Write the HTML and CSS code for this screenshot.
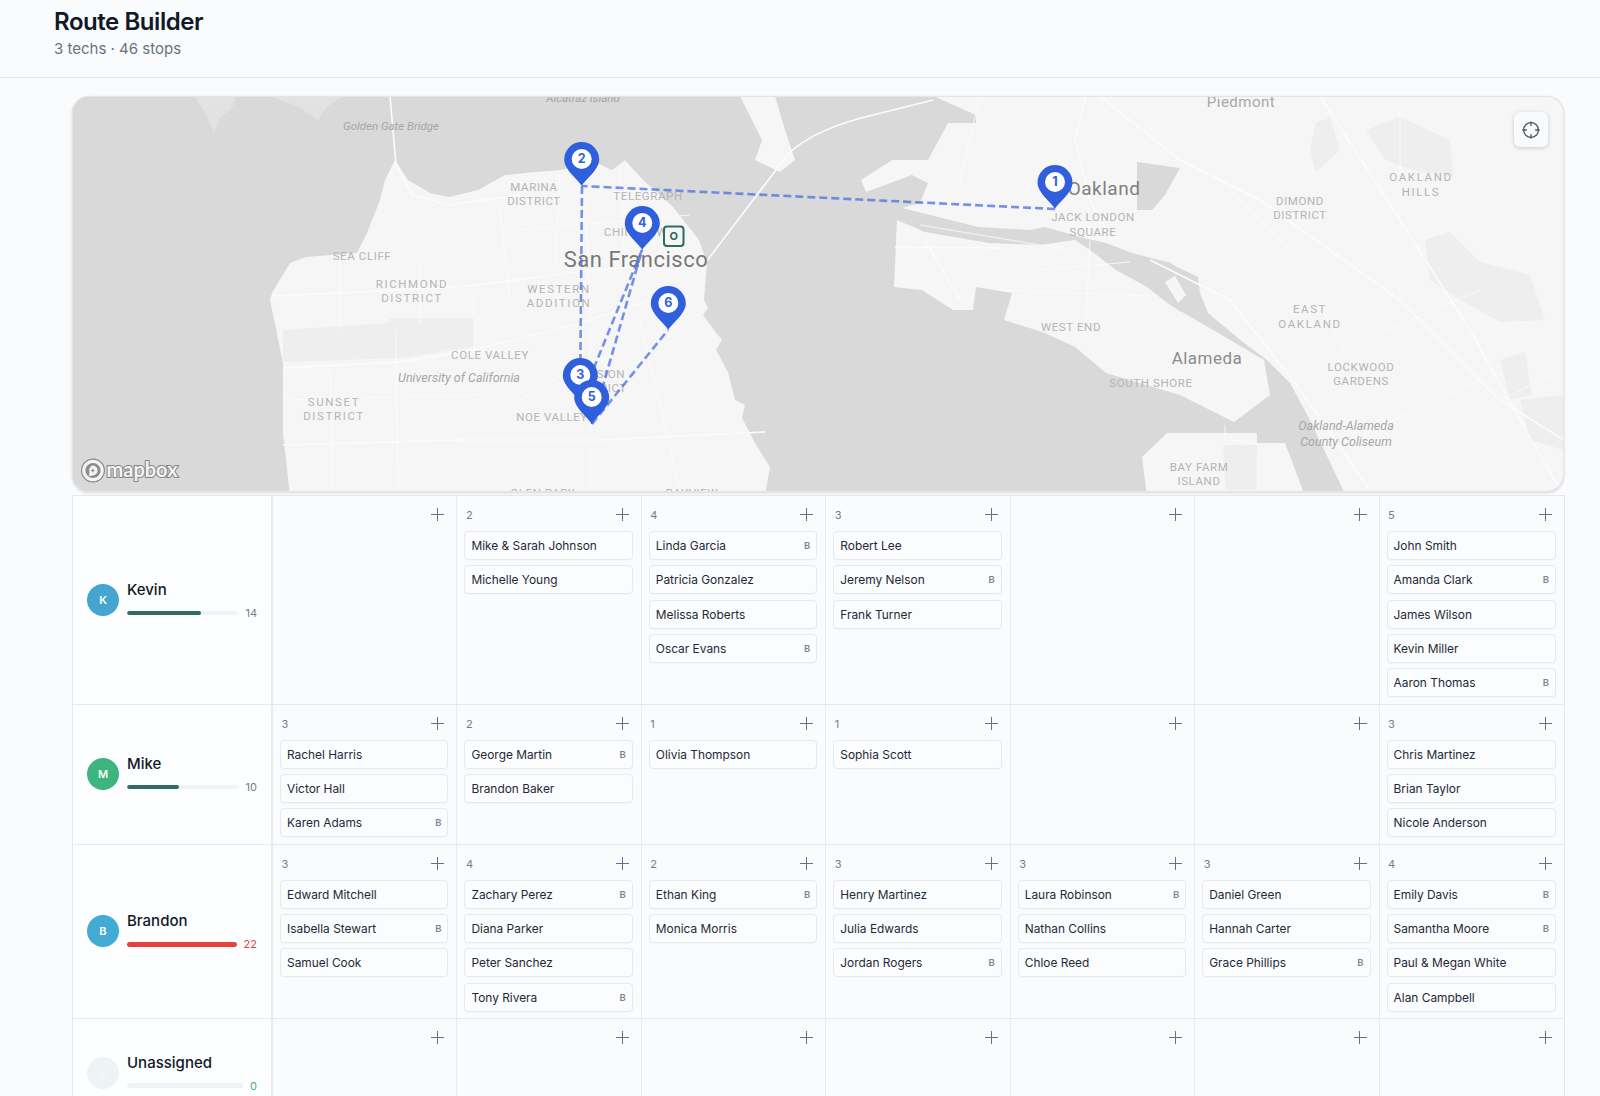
FILE: index.html
```html
<!DOCTYPE html>
<html lang="en">
<head>
  <meta charset="UTF-8" />
  <title>Route Builder</title>
  <link rel="stylesheet" href="styles.css">
</head>
<body>
  <header class="topbar">
    <h1>Route Builder</h1>
    <p>3 techs · 46 stops</p>
  </header>

  <main class="page">
    <!-- Map: the viewBox uses page coordinates, so everything below reads like the screenshot -->
    <div class="map">
      <svg class="map-art" viewBox="72 96 1492 396">
        <defs>
          <path id="pin-shape" d="M0 0C-3-6-17.5-16-17.5-26.5A17.5 17.5 0 1 1 17.5-26.5C17.5-16 3-6 0 0Z"/>
        </defs>
        <rect class="water" x="72" y="96" width="1492" height="396"/>

        <!-- land -->
        <path class="faint" d="M194 96 L205 112 L214 133 L220 118 L232 108 L236 96 Z"/>
        <path class="faint" d="M270 96 L300 108 L318 120 L326 108 L342 96 Z"/>
        <path class="land" d="M395 160 L408 180 L430 193 L449 197 L478 190 L505 175 L535 172 L561 170 L597 163 L612 170 L625 160 L643 180 L660 195 L673 207 L699 240 L707 263 L704 300 L708 308 L703 315 L714 330 L722 340 L716 350 L728 372 L735 400 L745 405 L742 418 L755 443 L770 467 L765 496 L290 496 L283 433 L283 363 L270 300 L272 293 L290 263 L306 257 L357 253 L367 233 L380 200 L385 180 Z"/>
        <path class="land" d="M740 96 L762 140 L755 160 L780 172 L795 160 L785 130 L775 96 Z"/>
        <path class="land" d="M933 96 L976 115 L976 123 L948 123 L928 160 L892 160 L861 180 L866 192 L912 175 L928 183 L920 203 L902 208 L978 227 L1030 230 L1045 227 L1080 237 L1106 243 L1132 253 L1167 262 L1198 277 L1200 293 L1208 313 L1244 343 L1267 360 L1290 383 L1310 420 L1346 496 L1564 496 L1564 96 Z"/>
        <path class="land" d="M897 220 L925 232 L989 243 L1040 245 L1075 240 L1090 250 L1116 270 L1147 287 L1170 305 L1208 327 L1264 360 L1270 395 L1250 410 L1234 422 L1180 395 L1106 373 L1075 347 L1045 333 L1004 320 L1012 293 L976 287 L973 310 L953 310 L922 290 L894 287 Z"/>
        <path class="land" d="M1142 457 L1167 433 L1257 433 L1257 443 L1285 443 L1305 496 L1147 496 Z"/>
        <path class="water" d="M1137 162 L1180 168 L1165 195 L1152 210 L1137 210 Z"/>
        <path class="water" d="M1150 268 L1170 262 L1190 280 L1195 300 L1180 312 L1165 295 Z"/>
        <path class="land" d="M1165 282 L1175 276 L1186 295 L1178 303 Z"/>

        <!-- parks -->
        <path class="park" d="M283 330 L388 323 L390 318 L474 318 L474 347 L400 358 L283 362 Z"/>
        <path class="park" d="M1316 122 L1330 118 L1340 150 L1316 172 L1310 150 Z"/>
        <path class="park" d="M1366 130 L1400 117 L1450 140 L1453 177 L1420 172 L1385 160 Z"/>
        <path class="park" d="M1425 240 L1450 232 L1480 262 L1530 275 L1545 320 L1500 322 L1460 300 L1430 280 Z"/>
        <path class="park" d="M1500 360 L1525 352 L1532 395 L1510 400 Z"/>
        <path class="park" d="M1520 400 L1564 395 L1564 450 L1530 440 Z"/>
        <path class="park" d="M1223 445 L1257 445 L1257 490 L1226 490 Z"/>

        <!-- roads -->
        <g class="road">
          <path d="M390 96 L396 165 L412 195 L449 205 L520 195"/>
          <path d="M272 296 L360 292 L470 286 L575 272 L690 262"/>
          <path d="M283 368 L400 362 L474 350 L574 325 L650 300"/>
          <path d="M283 445 L460 440 L600 440 L765 432"/>
          <path d="M706 262 L782 162 Q800 135 861 118 L933 100"/>
          <path d="M1086 96 L1075 140 L1090 200 L1110 238"/>
          <path d="M1100 96 L1180 160 L1260 200 L1400 300 L1500 400 L1564 440"/>
          <path d="M1320 96 L1400 220 L1470 330 L1520 420 L1560 490"/>
          <path d="M1150 260 L1230 300 L1300 390 L1370 490"/>
          <path d="M895 247 L1000 248"/>
          <path d="M925 240 L960 300"/>
        </g>
        <g class="road thin">
          <path d="M330 364 L333 490"/>
          <path d="M396 330 L398 490"/>
          <path d="M474 290 L474 350"/>
          <path d="M585 200 L590 300 L590 490"/>
          <path d="M640 320 L680 490"/>
          <path d="M520 400 L570 370 L640 345 L700 300"/>
          <path d="M340 262 L340 330"/>
          <path d="M420 262 L420 325"/>
          <path d="M500 210 L510 300"/>
          <path d="M283 400 L480 395"/>
          <path d="M520 230 L690 215"/>
          <path d="M560 175 L555 270"/>
          <path d="M620 170 L625 265"/>
          <path d="M980 96 L960 180 L990 225"/>
          <path d="M1040 130 L1220 130"/>
          <path d="M920 225 L1070 250"/>
          <path d="M1090 240 L1085 340"/>
          <path d="M1225 440 L1242 441 L1258 445 L1290 490"/>
          <path d="M1225 425 L1225 440"/>
          <path d="M1400 300 L1400 96"/>
          <path d="M1440 490 L1500 400 L1564 370"/>
          <path d="M1040 270 L1130 262"/>
          <path d="M1000 290 L1150 296"/>
          <path d="M1210 170 L1290 250 L1350 360"/>
          <path d="M1340 350 L1480 290"/>
          <path d="M1350 440 L1480 380"/>
        </g>

        <!-- labels -->
        <text class="lbl it" x="583" y="102">Alcatraz Island</text>
        <text class="place sm" x="1241" y="107">Piedmont</text>
        <text class="lbl it" x="391" y="130">Golden Gate Bridge</text>
        <text class="lbl" x="534" y="191">MARINA</text>
        <text class="lbl" x="534" y="205">DISTRICT</text>
        <text class="lbl" x="648" y="200">TELEGRAPH</text>
        <text class="lbl" x="640" y="236">CHINATOWN</text>
        <text class="lbl" x="362" y="260">SEA CLIFF</text>
        <text class="lbl wide" x="412" y="288">RICHMOND</text>
        <text class="lbl wide" x="412" y="302">DISTRICT</text>
        <text class="lbl wide" x="559" y="293">WESTERN</text>
        <text class="lbl wide" x="559" y="307">ADDITION</text>
        <text class="lbl" x="490" y="359">COLE VALLEY</text>
        <text class="lbl it big" x="459" y="382">University of California</text>
        <text class="lbl wide" x="334" y="406">SUNSET</text>
        <text class="lbl wide" x="334" y="420">DISTRICT</text>
        <text class="lbl" x="552" y="421">NOE VALLEY</text>
        <text class="lbl" x="600" y="378">MISSION</text>
        <text class="lbl" x="600" y="392">DISTRICT</text>
        <text class="lbl" x="543" y="497">GLEN PARK</text>
        <text class="lbl" x="692" y="497">BAYVIEW</text>
        <text class="place" x="636" y="267">San Francisco</text>
        <text class="place mid" x="1104" y="195">Oakland</text>
        <text class="lbl" x="1093" y="221">JACK LONDON</text>
        <text class="lbl" x="1093" y="236">SQUARE</text>
        <text class="lbl" x="1071" y="331">WEST END</text>
        <text class="place alm" x="1207" y="364">Alameda</text>
        <text class="lbl" x="1151" y="387">SOUTH SHORE</text>
        <text class="lbl" x="1199" y="471">BAY FARM</text>
        <text class="lbl" x="1199" y="485">ISLAND</text>
        <text class="lbl wide" x="1310" y="313">EAST</text>
        <text class="lbl wide" x="1310" y="328">OAKLAND</text>
        <text class="lbl" x="1361" y="371">LOCKWOOD</text>
        <text class="lbl" x="1361" y="385">GARDENS</text>
        <text class="lbl it big" x="1346" y="430">Oakland-Alameda</text>
        <text class="lbl it big" x="1346" y="446">County Coliseum</text>
        <text class="lbl" x="1300" y="205">DIMOND</text>
        <text class="lbl" x="1300" y="219">DISTRICT</text>
        <text class="lbl wide" x="1421" y="181">OAKLAND</text>
        <text class="lbl wide" x="1421" y="196">HILLS</text>

        <!-- route -->
        <g class="route">
          <path d="M1055 209 L582 186"/>
          <path d="M582 186 L580 402"/>
          <path d="M580 402 L642 250"/>
          <path d="M592 424 L642 250"/>
          <path d="M592 424 L668 330"/>
        </g>

        <!-- pins, each group sits on its tip -->
        <g class="pin" transform="translate(1055 209)"><use href="#pin-shape"/><circle cy="-27" r="10"/><text y="-22.7">1</text></g>
        <g class="pin" transform="translate(581.7 186)"><use href="#pin-shape"/><circle cy="-27" r="10"/><text y="-22.7">2</text></g>
        <g class="pin" transform="translate(642.3 250)"><use href="#pin-shape"/><circle cy="-27" r="10"/><text y="-22.7">4</text></g>
        <g class="pin" transform="translate(668.3 330)"><use href="#pin-shape"/><circle cy="-27" r="10"/><text y="-22.7">6</text></g>
        <g class="pin" transform="translate(580.3 402)"><use href="#pin-shape"/><circle cy="-27" r="10"/><text y="-22.7">3</text></g>
        <g class="pin" transform="translate(591.7 424)"><use href="#pin-shape"/><circle cy="-27" r="10"/><text y="-22.7">5</text></g>

        <!-- depot -->
        <rect class="depot" x="664" y="226.5" width="19.5" height="19.5" rx="3"/>
        <text class="depot-text" x="673.8" y="240.2">O</text>

        <!-- mapbox logo -->
        <circle class="mb-ring" cx="93" cy="470.5" r="11.4"/>
        <circle class="mb-inner" cx="93" cy="470.5" r="7.6"/>
        <path class="mb-drop" d="M92.6 465.5a5 5 0 0 1 0 10l-3.6.6.5-3.9a5 5 0 0 1 3.1-6.7z"/>
        <path class="mb-plus" d="M92.8 468.8v3.4M91.1 470.5h3.4"/>
        <text class="mb-word" x="106.5" y="477">mapbox</text>
      </svg>

      <button class="locate">
        <svg width="18" height="18" viewBox="0 0 18 18" fill="none" stroke="#4b5563" stroke-width="1.3" stroke-linecap="round">
          <circle cx="9" cy="9" r="7.4"/>
          <path d="M9 .8v3.6M9 13.6v3.6M.8 9h3.6M13.6 9h3.6"/>
        </svg>
      </button>
    </div>

    <!-- Board -->
    <div class="board">
      <!-- Kevin -->
      <div class="tech">
        <div class="avatar kevin">K</div>
        <div class="tech-info">
          <div class="tech-name">Kevin</div>
          <div class="load"><div class="track"><div class="fill" style="width:66%"></div></div><span class="num">14</span></div>
        </div>
      </div>
      <div class="day"><div class="day-head"><span></span><i class="plus"></i></div></div>
      <div class="day"><div class="day-head"><span>2</span><i class="plus"></i></div>
        <div class="stop">Mike &amp; Sarah Johnson</div>
        <div class="stop">Michelle Young</div>
      </div>
      <div class="day"><div class="day-head"><span>4</span><i class="plus"></i></div>
        <div class="stop">Linda Garcia<b>B</b></div>
        <div class="stop">Patricia Gonzalez</div>
        <div class="stop">Melissa Roberts</div>
        <div class="stop">Oscar Evans<b>B</b></div>
      </div>
      <div class="day"><div class="day-head"><span>3</span><i class="plus"></i></div>
        <div class="stop">Robert Lee</div>
        <div class="stop">Jeremy Nelson<b>B</b></div>
        <div class="stop">Frank Turner</div>
      </div>
      <div class="day"><div class="day-head"><span></span><i class="plus"></i></div></div>
      <div class="day"><div class="day-head"><span></span><i class="plus"></i></div></div>
      <div class="day"><div class="day-head"><span>5</span><i class="plus"></i></div>
        <div class="stop">John Smith</div>
        <div class="stop">Amanda Clark<b>B</b></div>
        <div class="stop">James Wilson</div>
        <div class="stop">Kevin Miller</div>
        <div class="stop">Aaron Thomas<b>B</b></div>
      </div>

      <!-- Mike -->
      <div class="tech">
        <div class="avatar mike">M</div>
        <div class="tech-info">
          <div class="tech-name">Mike</div>
          <div class="load"><div class="track"><div class="fill" style="width:47%"></div></div><span class="num">10</span></div>
        </div>
      </div>
      <div class="day"><div class="day-head"><span>3</span><i class="plus"></i></div>
        <div class="stop">Rachel Harris</div>
        <div class="stop">Victor Hall</div>
        <div class="stop">Karen Adams<b>B</b></div>
      </div>
      <div class="day"><div class="day-head"><span>2</span><i class="plus"></i></div>
        <div class="stop">George Martin<b>B</b></div>
        <div class="stop">Brandon Baker</div>
      </div>
      <div class="day"><div class="day-head"><span>1</span><i class="plus"></i></div>
        <div class="stop">Olivia Thompson</div>
      </div>
      <div class="day"><div class="day-head"><span>1</span><i class="plus"></i></div>
        <div class="stop">Sophia Scott</div>
      </div>
      <div class="day"><div class="day-head"><span></span><i class="plus"></i></div></div>
      <div class="day"><div class="day-head"><span></span><i class="plus"></i></div></div>
      <div class="day"><div class="day-head"><span>3</span><i class="plus"></i></div>
        <div class="stop">Chris Martinez</div>
        <div class="stop">Brian Taylor</div>
        <div class="stop">Nicole Anderson</div>
      </div>

      <!-- Brandon -->
      <div class="tech">
        <div class="avatar brandon">B</div>
        <div class="tech-info">
          <div class="tech-name">Brandon</div>
          <div class="load over"><div class="track"><div class="fill" style="width:100%"></div></div><span class="num">22</span></div>
        </div>
      </div>
      <div class="day"><div class="day-head"><span>3</span><i class="plus"></i></div>
        <div class="stop">Edward Mitchell</div>
        <div class="stop">Isabella Stewart<b>B</b></div>
        <div class="stop">Samuel Cook</div>
      </div>
      <div class="day"><div class="day-head"><span>4</span><i class="plus"></i></div>
        <div class="stop">Zachary Perez<b>B</b></div>
        <div class="stop">Diana Parker</div>
        <div class="stop">Peter Sanchez</div>
        <div class="stop">Tony Rivera<b>B</b></div>
      </div>
      <div class="day"><div class="day-head"><span>2</span><i class="plus"></i></div>
        <div class="stop">Ethan King<b>B</b></div>
        <div class="stop">Monica Morris</div>
      </div>
      <div class="day"><div class="day-head"><span>3</span><i class="plus"></i></div>
        <div class="stop">Henry Martinez</div>
        <div class="stop">Julia Edwards</div>
        <div class="stop">Jordan Rogers<b>B</b></div>
      </div>
      <div class="day"><div class="day-head"><span>3</span><i class="plus"></i></div>
        <div class="stop">Laura Robinson<b>B</b></div>
        <div class="stop">Nathan Collins</div>
        <div class="stop">Chloe Reed</div>
      </div>
      <div class="day"><div class="day-head"><span>3</span><i class="plus"></i></div>
        <div class="stop">Daniel Green</div>
        <div class="stop">Hannah Carter</div>
        <div class="stop">Grace Phillips<b>B</b></div>
      </div>
      <div class="day"><div class="day-head"><span>4</span><i class="plus"></i></div>
        <div class="stop">Emily Davis<b>B</b></div>
        <div class="stop">Samantha Moore<b>B</b></div>
        <div class="stop">Paul &amp; Megan White</div>
        <div class="stop">Alan Campbell</div>
      </div>

      <!-- Unassigned -->
      <div class="tech last">
        <div class="avatar none">U</div>
        <div class="tech-info">
          <div class="tech-name">Unassigned</div>
          <div class="load empty"><div class="track"></div><span class="num">0</span></div>
        </div>
      </div>
      <div class="day last"><div class="day-head"><span></span><i class="plus"></i></div></div>
      <div class="day last"><div class="day-head"><span></span><i class="plus"></i></div></div>
      <div class="day last"><div class="day-head"><span></span><i class="plus"></i></div></div>
      <div class="day last"><div class="day-head"><span></span><i class="plus"></i></div></div>
      <div class="day last"><div class="day-head"><span></span><i class="plus"></i></div></div>
      <div class="day last"><div class="day-head"><span></span><i class="plus"></i></div></div>
      <div class="day last"><div class="day-head"><span></span><i class="plus"></i></div></div>
    </div>
  </main>
</body>
</html>
```

FILE: styles.css
```css
* {
  margin: 0;
  padding: 0;
  box-sizing: border-box;
}

html, body {
  height: 100%;
  background-color: #f9fbfd;
  color: #111827;
  font-family: 'Inter', 'Liberation Sans', sans-serif;
  overflow: hidden;
}

/* Header */
.topbar {
  height: 78px;
  padding: 9px 54px 0;
  border-bottom: 1px solid #e2e6ea;
}

.topbar h1 {
  font-size: 24px;
  line-height: 25px;
  font-weight: 600;
  letter-spacing: -0.45px;
}

.topbar p {
  margin-top: 5px;
  font-size: 15px;
  line-height: 20px;
  color: #6b7280;
}

.page {
  padding: 18px 36px 0 72px;
}

/* Map */
.map {
  position: relative;
  z-index: 1;
  height: 396px;
  border-radius: 17px;
  overflow: hidden;
  border: 1px solid #e3e5e8;
  box-shadow: 0 1px 3px rgba(0, 0, 0, 0.14);
  background: #d9d9d9;
}

.map-art {
  display: block;
  margin: -1px;
  width: 1492px;
  height: 396px;
}

.water { fill: #d9d9d9; }
.faint { fill: #e2e2e2; }
.land { fill: #f6f6f6; }
.park { fill: #eeeeee; }

.road path {
  fill: none;
  stroke: #fcfcfc;
  stroke-width: 1.6;
}

.road.thin path {
  stroke-width: 0.8;
}

.route path {
  fill: none;
  stroke: #4a6fe0;
  stroke-width: 2.6;
  stroke-dasharray: 8 4;
  opacity: 0.75;
}

.lbl {
  font-family: 'Roboto', 'Liberation Sans', sans-serif;
  font-size: 11.5px;
  letter-spacing: 0.6px;
  fill: #b4b4b4;
  text-anchor: middle;
}

.lbl.wide { letter-spacing: 1.6px; }
.lbl.it { font-style: italic; letter-spacing: 0; fill: #a6a6a6; }
.lbl.big { font-size: 12.5px; }

.place {
  font-family: 'Roboto', 'Liberation Sans', sans-serif;
  font-size: 22px;
  letter-spacing: 0.5px;
  fill: #787878;
  text-anchor: middle;
}

.place.mid { font-size: 19px; fill: #808080; }
.place.alm { font-size: 17px; fill: #8c8c8c; }
.place.sm { font-size: 15px; fill: #a8a8a8; }

.pin use { fill: #2f5fdd; }
.pin circle { fill: #fff; }

.pin text {
  font-size: 12.5px;
  font-weight: 700;
  fill: #2f5fdd;
  text-anchor: middle;
}

.depot {
  fill: #f3f6f5;
  stroke: #2f6b62;
  stroke-width: 2;
}

.depot-text {
  font-size: 11px;
  font-weight: 700;
  fill: #2f6b62;
  text-anchor: middle;
}

.mb-ring { fill: #f4f4f4; stroke: #868686; stroke-width: 1.2; }
.mb-inner { fill: #8c8c8c; }
.mb-drop { fill: #f4f4f4; }
.mb-plus { fill: none; stroke: #8c8c8c; stroke-width: 1.2; }

.mb-word {
  font-family: 'Lato', 'Liberation Sans', sans-serif;
  font-size: 20px;
  font-weight: 700;
  fill: #f4f4f4;
  stroke: #868686;
  stroke-width: 2.2;
  paint-order: stroke fill;
}

.locate {
  position: absolute;
  right: 15px;
  top: 15px;
  width: 34px;
  height: 35px;
  border: none;
  border-radius: 6px;
  background: #f9fafb;
  box-shadow: 0 1px 4px rgba(0, 0, 0, 0.18);
  display: flex;
  align-items: center;
  justify-content: center;
}

/* Board */
.board {
  display: grid;
  grid-template-columns: 200px repeat(7, 1fr);
  margin-top: 3px;
  margin-right: -1px;
  border-left: 1px solid #e5e8ec;
  border-right: 1px solid #e5e8ec;
  border-top: 1px solid #e5e8ec;
}

.tech {
  display: flex;
  align-items: center;
  gap: 8px;
  padding: 0 14px;
  background: #fdfeff;
  border-right: 2px solid #e8ebee;
  border-bottom: 1px solid #e5e8ec;
}

.tech.last { min-height: 108px; }

.avatar {
  flex: none;
  width: 32px;
  height: 32px;
  border-radius: 50%;
  color: #fff;
  font-size: 11px;
  font-weight: 600;
  line-height: 32px;
  text-align: center;
}

.avatar.kevin { background: #45a5cf; }
.avatar.mike { background: #3eb57f; }
.avatar.brandon { background: #42abd3; }
.avatar.none { background: #eef3f6; color: #f6f9fb; }

.tech-info { flex: 1; min-width: 0; }

.tech-name {
  font-size: 15px;
  line-height: 20px;
  font-weight: 500;
  color: #111827;
}

.load {
  display: flex;
  align-items: center;
  gap: 7px;
  margin-top: 6px;
  height: 14px;
}

.track {
  flex: 1;
  height: 4.5px;
  border-radius: 2px;
  background: #f1f4f6;
  overflow: hidden;
}

.fill {
  height: 100%;
  border-radius: 2px;
  background: #2f6b62;
}

.num {
  font-size: 11px;
  color: #737d8c;
}

.over .fill { background: #e5423b; }
.over .num { color: #e5423b; }
.empty .num { color: #3eb57f; }

.day {
  padding: 0 8px 6.5px 7px;
  border-right: 1px solid #e8ebee;
  border-bottom: 1px solid #e5e8ec;
  display: flex;
  flex-direction: column;
  gap: 5.3px;
}

.day:nth-child(8n) { border-right: none; }

.day-head {
  display: flex;
  justify-content: space-between;
  align-items: center;
  height: 29.7px;
  padding: 8px 4px 0 1.5px;
  font-size: 11px;
  color: #737d8c;
}

.plus {
  display: block;
  width: 13px;
  height: 13px;
  background:
    linear-gradient(#64708a, #64708a) center / 13px 1.3px no-repeat,
    linear-gradient(#64708a, #64708a) center / 1.3px 13px no-repeat;
}

.stop {
  display: flex;
  justify-content: space-between;
  align-items: center;
  height: 29px;
  padding: 0 6px;
  background: #fbfcfd;
  border: 1px solid #e6e9ed;
  border-radius: 4px;
  box-shadow: 0 1px 1px rgba(0, 0, 0, 0.02);
  font-size: 11.9px;
  color: #1f2937;
  white-space: nowrap;
}

.stop b {
  font-size: 9.5px;
  font-weight: 600;
  color: #7b8494;
}
```
